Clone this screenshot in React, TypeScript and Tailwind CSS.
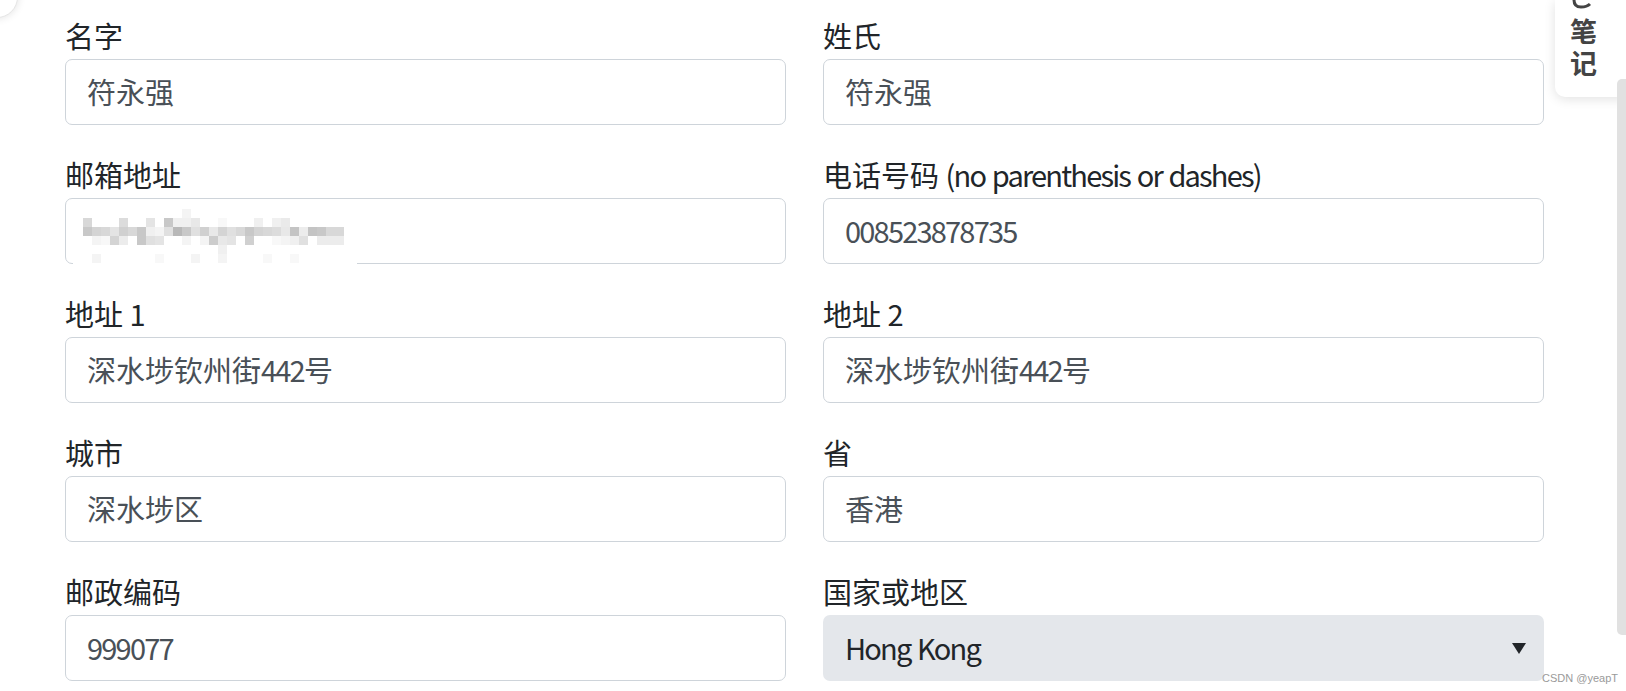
import React from 'react';

const FONT = '"Noto Sans CJK SC", "Noto Sans", sans-serif';

interface Field {
    label: string;
    value: string;
    blurred?: boolean;
    select?: boolean;
}

const fields: Field[] = [
    { label: '名字', value: '符永强' },
    { label: '姓氏', value: '符永强' },
    { label: '邮箱地址', value: '', blurred: true },
    { label: '电话号码 (no parenthesis or dashes)', value: '008523878735' },
    { label: '地址 1', value: '深水埗钦州街442号' },
    { label: '地址 2', value: '深水埗钦州街442号' },
    { label: '城市', value: '深水埗区' },
    { label: '省', value: '香港' },
    { label: '邮政编码', value: '999077' },
    { label: '国家或地区', value: 'Hong Kong', select: true },
];

// latin words are set a little tighter so they match the narrow reference face
const Txt: React.FC<{ text: string }> = ({ text }) => (
    <>
        {text.split(/([\x21-\x7E]+)/).map((part, i) =>
            /^[\x21-\x7E]+$/.test(part) ? (
                <span key={i} className="tracking-[-1.8px]">
                    {part}
                </span>
            ) : (
                part
            ),
        )}
    </>
);

// pixelated email: one row per string, two hex chars per cell ("00" = empty)
const mosaic: string[] = [
    '0000000000000000000000f400000000000000000000000000000000000000',
    'd8000000dc0000e400c8f0f0e80000f8000000f000f0ea00000000000000',
    'c8d4d8e4d0d8c8f0f4e0b8c8e0d0e8d4e0d8c8d4d8dce8c4ecc4c8d8d8',
    '00f4f8d4ec00c8e0e40000f400f4cce8e400d00000f8f4f0e000ececec',
    '000000000000000000000000000000f00000000000000000000000000000',
    '00f4000000000000f8000000f40000f400000000f80000f8000000000000f400',
];

const Mosaic: React.FC = () => (
    <div className="pointer-events-none absolute left-[8px] top-[11px]">
        <div className="absolute left-0 top-[36px] h-[21px] w-[284px] bg-white" />
        <div className="relative left-[10px] flex flex-col">
            {mosaic.map((row, r) => (
                <div key={r} className="flex">
                    {Array.from({ length: 29 }).map((_, c) => {
                        const hex = row.slice(c * 2, c * 2 + 2);
                        const filled = hex.length === 2 && hex !== '00';
                        return (
                            <div
                                key={c}
                                className="h-[9px] w-[9px]"
                                style={{
                                    backgroundColor: filled
                                        ? `#${hex}${hex}${hex}`
                                        : 'transparent',
                                }}
                            />
                        );
                    })}
                </div>
            ))}
        </div>
    </div>
);

const App: React.FC = () => {
    return (
        <div
            className="relative h-[691px] w-[1626px] overflow-hidden bg-white"
            style={{ fontFamily: FONT }}
        >
            <div className="grid grid-cols-[721px_721px] gap-x-[37px] gap-y-[29px] pl-[65px] pt-[15px]">
                {fields.map((f) => (
                    <div key={f.label} className="flex flex-col">
                        <label className="mb-[4px] h-[40px] text-[29px] leading-[40px] text-[#212529]">
                            <Txt text={f.label} />
                        </label>
                        {f.select ? (
                            <div className="flex h-[66px] items-center justify-between rounded-[7px] bg-[#e4e7eb] pl-[22px] pr-[18px] text-[29px] text-[#212529]">
                                <span>
                                    <Txt text={f.value} />
                                </span>
                                <svg width="14" height="11" viewBox="0 0 14 11">
                                    <path d="M0 0h14L7 11z" fill="#212529" />
                                </svg>
                            </div>
                        ) : (
                            <div className="relative">
                                <div className="flex h-[66px] items-center rounded-[7px] border border-[#ced4da] bg-white px-[21px] text-[29px] text-[#495057]">
                                    <Txt text={f.value} />
                                </div>
                                {f.blurred && <Mosaic />}
                            </div>
                        )}
                    </div>
                ))}
            </div>

            {/* cut-off round button, top left */}
            <div className="absolute -left-[24px] -top-[24px] h-[42px] w-[42px] rounded-full border border-[#e6e6e6] bg-white shadow-[0_0_8px_rgba(0,0,0,0.12)]" />

            {/* notes tab, top right */}
            <div className="absolute right-0 top-0 flex h-[97px] w-[71px] flex-col items-start rounded-bl-[10px] bg-white shadow-[0_2px_12px_rgba(0,0,0,0.12)]">
                <svg width="22" height="9" viewBox="0 0 22 9" className="ml-[16px]">
                    <path d="M3 0 Q3 7 10 7 Q16 7 19 4" fill="none" stroke="#444" strokeWidth="3" />
                </svg>
                <span className="ml-[15px] mt-[6px] block w-[28px] text-[27px] font-bold leading-[32px] text-[#444]">
                    笔
                </span>
                <span className="ml-[15px] block w-[28px] text-[27px] font-bold leading-[32px] text-[#444]">
                    记
                </span>
            </div>

            {/* scrollbar thumb */}
            <div className="absolute left-[1617px] top-[79px] h-[556px] w-[9px] rounded-bl-[5px] rounded-tl-[5px] bg-[#e1e1e1]" />

            {/* watermark */}
            <div
                className="absolute left-[1542px] top-[670px] text-[11px] text-[#9a9a9a]"
                style={{ fontFamily: '"Liberation Sans", sans-serif' }}
            >
                CSDN @yeapT
            </div>
        </div>
    );
};

export default App;
